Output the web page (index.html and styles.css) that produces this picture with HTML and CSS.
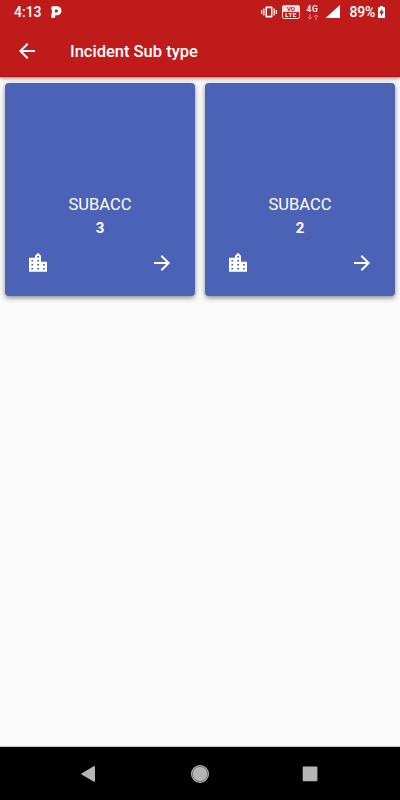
FILE: index.html
```html
<!DOCTYPE html>
<html lang="en">
<head>
<meta charset="utf-8">
<title>Incident Sub type</title>
<link rel="stylesheet" href="styles.css">
</head>
<body>
<svg class="defs" aria-hidden="true">
  <symbol id="city" viewBox="0 0 24 24"><path class="city-shape" d="M15 10.7V4.8l-3-3-3 3v2H3v14h18v-10.1h-6zM7.2 18.6H5.4v-1.7h1.8zm0-4H5.4v-1.7h1.8zm0-4H5.4V8.9h1.8zm5.8 8h-1.8v-1.7H13zm0-4h-1.8v-1.7H13zm0-4h-1.8V8.9H13zm0-4h-1.8V4.9H13zm5.8 12H17v-1.7h1.8zm0-4H17v-1.7h1.8z"/></symbol>
  <symbol id="forward" viewBox="0 0 24 24"><path d="M12 4l-1.41 1.41L16.17 11H4v2h12.17l-5.58 5.59L12 20l8-8z"/></symbol>
</svg>
<div class="screen">
  <header class="header">
    <div class="status">
      <span class="time">4:13</span>
      <svg class="app-mark" width="11" height="13" viewBox="0 0 11 13"><path fill-rule="evenodd" d="M1.6.3H6a4.3 4.3 0 0 1 0 9H4.2v1.2a1.6 1.6 0 0 1-1.6 1.6H.4V8L1 6.6V4.2H.4V1.3q0-1 1.2-1zM4 3.6v2.8h1.6a1.4 1.4 0 0 0 0-2.8z"/></svg>
      <svg class="vibrate" width="16" height="12" viewBox="0 0 16 12"><path fill-rule="evenodd" d="M0 4h1.3v4H0zM2.2 2.5h1.3v7H2.2zM12.5 2.5h1.3v7h-1.3zM14.7 4H16v4h-1.3zM5.3.5h5.4q.8 0 .8.8v9.4q0 .8-.8.8H5.3q-.8 0-.8-.8V1.3q0-.8.8-.8zM6 2.3v7.4h4V2.3z"/></svg>
      <span class="volte"><span class="vo">VO</span><span class="lte">LTE</span></span>
      <span class="network"><span>4G</span>
        <svg width="12" height="6" viewBox="0 0 12 6"><path d="M3 0v5M.8 3L3 5.2 5.2 3M9 6V1M6.8 3L9 .8 11.2 3"/></svg>
      </span>
      <svg class="signal" width="15" height="13" viewBox="0 0 15 13"><path d="M15 0v13H.5z"/></svg>
      <span class="percent">89%</span>
      <svg class="battery" width="7" height="12" viewBox="0 0 7 12"><path fill-rule="evenodd" d="M2 0h3v1.2h1.4q.6 0 .6.6v9.6q0 .6-.6.6H.6q-.6 0-.6-.6V1.8q0-.6.6-.6H2zM4.3 2.5L1.1 7.2h1.8v3.3l3-4.9H4.3z"/></svg>
    </div>
    <div class="toolbar">
      <svg class="back" width="24" height="24" viewBox="0 0 24 24"><path d="M20 11H7.83l5.59-5.59L12 4l-8 8 8 8 1.41-1.41L7.83 13H20v-2z"/></svg>
      <h1 class="title">Incident Sub type</h1>
    </div>
  </header>
  <main class="grid">
    <article class="card">
      <div class="name">SUBACC</div>
      <div class="count">3</div>
      <div class="actions">
        <svg width="24" height="24"><use href="#city"/></svg>
        <svg width="24" height="24"><use href="#forward"/></svg>
      </div>
    </article>
    <article class="card">
      <div class="name">SUBACC</div>
      <div class="count">2</div>
      <div class="actions">
        <svg width="24" height="24"><use href="#city"/></svg>
        <svg width="24" height="24"><use href="#forward"/></svg>
      </div>
    </article>
  </main>
  <nav class="navbar">
    <svg width="16" height="18" viewBox="0 0 16 18"><path d="M14 1q1 0 1 .8v14.4q0 .8-1 .6L1.5 9.6q-.7-.6 0-1.2z"/></svg>
    <svg class="home" width="20" height="20" viewBox="0 0 20 20"><circle cx="10" cy="10" r="9"/><circle class="ring" cx="10" cy="10" r="7.6"/></svg>
    <svg width="16" height="16" viewBox="0 0 16 16"><rect x=".7" y=".5" width="14.7" height="14.7" rx="1"/></svg>
  </nav>
</div>
</body>
</html>
```

FILE: styles.css
```css
* {
  box-sizing: border-box;
}

body {
  margin: 0;
  font-family: Roboto, "Liberation Sans", sans-serif;
  color: #fff;
}

svg {
  display: block;
  flex: none;
  fill: currentColor;
}

.defs {
  display: none;
}

.screen {
  display: flex;
  flex-direction: column;
  width: 400px;
  height: 800px;
  background: #fafafa;
}

.header {
  height: 77px;
  background: #bf1b1b;
  border-bottom: 1px solid #bd0b0b;
  box-shadow: 0 1px 4px rgba(0, 0, 0, 0.5);
}

.status {
  display: flex;
  align-items: center;
  height: 25px;
  padding-left: 14px;
  font-size: 14px;
  font-weight: 500;
  line-height: 25px;
}

.time {
  width: 37px;
}

.vibrate {
  margin-left: 199px;
  margin-top: -1px;
}

.volte {
  display: flex;
  flex-direction: column;
  width: 18px;
  height: 14px;
  margin-left: 5px;
  margin-top: -1px;
  border: 1px solid #f7dada;
  border-radius: 2px;
  font-size: 6px;
  font-weight: 700;
  line-height: 6px;
  text-align: center;
}

.vo {
  height: 6px;
  background: #f7dada;
  color: #bf1b1b;
}

.lte {
  height: 6px;
  letter-spacing: 0.6px;
}

.network {
  display: flex;
  flex-direction: column;
  align-items: center;
  width: 13px;
  margin-left: 6px;
  margin-top: -1px;
  font-size: 8.5px;
  line-height: 8px;
  letter-spacing: 0.7px;
}

.network svg {
  margin-top: 1px;
  fill: none;
  stroke: #df8585;
}

.signal {
  margin-left: 6px;
  margin-top: -2px;
}

.percent {
  width: 28.5px;
  margin-left: 9.5px;
  letter-spacing: -0.2px;
}

.battery {
  margin-top: -1px;
}

.toolbar {
  display: flex;
  align-items: center;
  height: 52px;
}

.back {
  margin-left: 15px;
}

.title {
  margin: 1px 0 0 31px;
  font-size: 16.5px;
  font-weight: 500;
  line-height: 24px;
}

.grid {
  display: grid;
  grid-template-columns: 1fr 1fr;
  gap: 10px;
  padding: 6px 5px;
  flex: 1;
  align-content: start;
}

.card {
  height: 213px;
  padding-top: 110px;
  border-radius: 4px;
  background: #4b62b6;
  box-shadow: 0 2px 5px rgba(0, 0, 0, 0.45);
  text-align: center;
}

.name {
  margin-bottom: -1px;
  font-size: 16.5px;
  line-height: 24px;
}

.count {
  font-size: 15px;
  font-weight: 700;
  line-height: 24px;
}

.actions {
  display: flex;
  justify-content: space-between;
  padding: 11px 21px 0;
}

.navbar {
  display: flex;
  align-items: center;
  justify-content: space-between;
  height: 54px;
  padding: 0 82px 0 80px;
  border-top: 1px solid #c7cacd;
  background: #000;
  color: #b5b5b5;
}

.home {
  margin-left: 2px;
}

.ring {
  fill: none;
  stroke: #555;
  stroke-width: 0.7;
}
```
